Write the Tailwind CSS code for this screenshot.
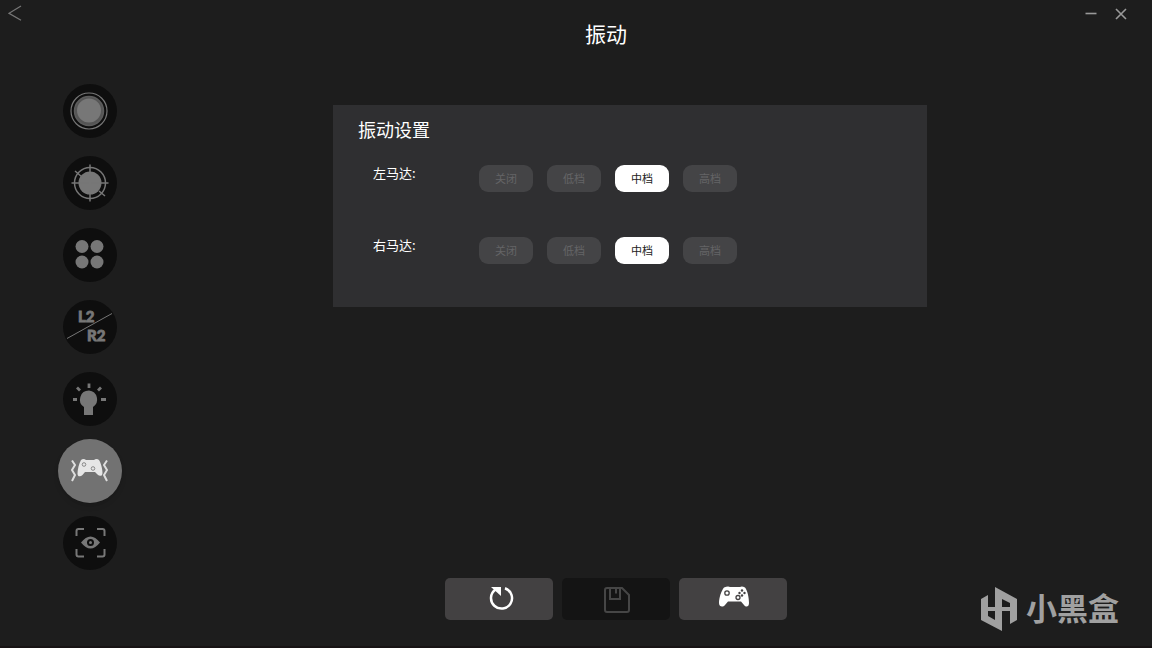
<!DOCTYPE html>
<html lang="zh-CN">
<head>
  <meta charset="UTF-8">
  <meta name="viewport" content="width=device-width, initial-scale=1">
  <title>振动</title>
  <script src="https://cdn.jsdelivr.net/npm/@tailwindcss/browser@4"></script>
</head>
<body class="bg-[#1d1d1d] min-h-screen flex flex-col text-white border-b-2 border-[#171314] font-['Noto_Sans_CJK_SC',sans-serif]">

  <header class="flex items-start justify-between h-[75px]">
    <button type="button" aria-label="返回" class="w-20 p-2 pt-[5px] text-[#777]">
      <svg class="w-[14px] h-4" viewBox="0 0 14 16" fill="none" stroke="currentColor" stroke-width="1.3"><path d="M13 1 1 8.3l12 7"/></svg>
    </button>
    <h1 class="text-[21px] leading-[30px] pt-[18px] pl-[60px]">振动</h1>
    <div class="w-20 flex justify-end gap-[18px] pt-2 pr-[25px] text-[#999]">
      <button type="button" aria-label="最小化">
        <svg class="w-3 h-3" viewBox="0 0 12 12" stroke="currentColor" stroke-width="1.6"><path d="M0.500 5.500h11"/></svg>
      </button>
      <button type="button" aria-label="关闭窗口">
        <svg class="w-3 h-3" viewBox="0 0 12 12" stroke="currentColor" stroke-width="1.6"><path d="m1 1 10 10M11 1 1 11"/></svg>
      </button>
    </div>
  </header>

  <div class="flex items-start">
    <nav class="flex flex-col w-[122px] pl-[58px] text-[#777]">
      <a href="#stick" aria-label="摇杆" class="h-[72px] flex items-center justify-center">
        <svg class="w-[54px] h-[54px] rounded-full bg-[#0e0e0e]" viewBox="0 0 54 54" fill="none" stroke="currentColor">
          <circle cx="26" cy="27" r="18" stroke-width="1.2"/>
          <circle cx="26" cy="27" r="14.500" fill="#555" stroke="#5c5c5c" stroke-width="1.500"/>
          <circle cx="26" cy="26.500" r="12" fill="currentColor" stroke="none"/>
        </svg>
      </a>
      <a href="#deadzone" aria-label="死区" class="h-[72px] flex items-center justify-center">
        <svg class="w-[54px] h-[54px] rounded-full bg-[#0e0e0e]" viewBox="0 0 54 54" fill="none" stroke="currentColor" stroke-width="1.500">
          <circle cx="27" cy="27" r="15.500"/>
          <circle cx="27" cy="27" r="11.500" fill="currentColor" stroke="none"/>
          <path d="M27 8.500v37M8.500 27h37M12 15l7 6M36 35l6 5"/>
        </svg>
      </a>
      <a href="#buttons" aria-label="按键" class="h-[72px] flex items-center justify-center">
        <svg class="w-[54px] h-[54px] rounded-full bg-[#0e0e0e]" viewBox="0 0 54 54" fill="currentColor">
          <circle cx="19" cy="18.500" r="6.500"/><circle cx="34" cy="18.500" r="6.500"/>
          <circle cx="19" cy="34" r="6.500"/><circle cx="34" cy="34" r="6.500"/>
        </svg>
      </a>
      <a href="#triggers" class="h-[72px] flex items-center justify-center">
        <svg class="w-[54px] h-[54px] rounded-full bg-[#0e0e0e] font-['Lato','Open_Sans',sans-serif] font-black text-[15px]" viewBox="0 0 54 54" fill="currentColor" stroke="currentColor">
          <path d="M4 38.500 49 13.500"/>
          <g stroke-width="0.800">
            <text x="15" y="22">L2</text>
            <text x="24" y="41">R2</text>
          </g>
        </svg>
      </a>
      <a href="#light" aria-label="灯光" class="h-[72px] flex items-center justify-center">
        <svg class="w-[54px] h-[54px] rounded-full bg-[#0e0e0e]" viewBox="0 0 54 54" fill="currentColor">
          <path d="M26 18.500a9 9 0 0 0-5 16.500v8h9v-8a9 9 0 0 0-4-16.500Z"/>
          <path d="M26 11.500v4.500M14 15.500l3 3M38 15.500l-3 3M10 27.500h4M38 27.500h5" stroke="currentColor" stroke-width="2.800"/>
        </svg>
      </a>
      <a href="#vibration" aria-label="振动" aria-current="page" class="h-[72px] flex items-center justify-center">
        <svg class="w-16 h-16 rounded-full bg-[#727272] shadow-md" viewBox="0 0 64 64" fill="#e6e6e6">
          <path d="M23 21c1.500-1.500 3.500-1.500 5 0h8c1.500-1.500 3.500-1.500 5 0 2 3 3.500 9 3.500 13 0 3.500-3 3.500-5 1.500l-2.500-2.500h-10L24.500 36c-2 2-5 2-5-1.500 0-4 1.500-10 3.500-13.500Z"/>
          <circle cx="26" cy="25.500" r="1.800" fill="none" stroke="#888"/>
          <circle cx="35" cy="29.500" r="1.800" fill="none" stroke="#888"/>
          <path d="m14 21.500 3 4.500-3 5 3 5-3 6M49 21.500 46 26l3 5-3 5 3 6" fill="none" stroke="#ddd" stroke-width="2"/>
        </svg>
      </a>
      <a href="#preview" aria-label="预览" class="h-[72px] flex items-center justify-center">
        <svg class="w-[54px] h-[54px] rounded-full bg-[#0e0e0e]" viewBox="0 0 54 54" fill="none" stroke="currentColor" stroke-width="2">
          <path d="M13.500 20v-5q0-2 2-2h5.500M34 13h5.500q2 0 2 2v5M41.500 33v5.500q0 2-2 2H34M21 40.500h-5.500q-2 0-2-2V33"/>
          <path d="M18 26.500q9.500-12 19 0-9.500 12-19 0Z" fill="currentColor" stroke="none"/>
          <circle cx="27.500" cy="26.500" r="2.500" stroke="#0e0e0e" fill="currentColor"/>
        </svg>
      </a>
    </nav>

    <main class="flex-1 pt-[30px] pl-[211px] pr-[225px]">
      <section class="bg-[#2f2f31] pt-3 pb-[43px] px-[25px]">
        <h2 class="text-[18px] leading-6">振动设置</h2>
        <form class="flex flex-col gap-[45px] pt-6 pl-[15px]">
          <fieldset class="flex">
            <legend class="float-left w-[106px] text-[13px] leading-4">左马达:</legend>
            <div class="flex gap-[14px] text-[11px] leading-[27px] text-center">
              <label class="relative"><input type="radio" name="left" class="peer sr-only"><span class="block w-[54px] rounded-[9px] bg-[#444446] text-[#646466] peer-checked:bg-white peer-checked:text-[#222]">关闭</span></label>
              <label class="relative"><input type="radio" name="left" class="peer sr-only"><span class="block w-[54px] rounded-[9px] bg-[#444446] text-[#646466] peer-checked:bg-white peer-checked:text-[#222]">低档</span></label>
              <label class="relative"><input type="radio" name="left" class="peer sr-only" checked><span class="block w-[54px] rounded-[9px] bg-[#444446] text-[#646466] peer-checked:bg-white peer-checked:text-[#222]">中档</span></label>
              <label class="relative"><input type="radio" name="left" class="peer sr-only"><span class="block w-[54px] rounded-[9px] bg-[#444446] text-[#646466] peer-checked:bg-white peer-checked:text-[#222]">高档</span></label>
            </div>
          </fieldset>
          <fieldset class="flex">
            <legend class="float-left w-[106px] text-[13px] leading-4">右马达:</legend>
            <div class="flex gap-[14px] text-[11px] leading-[27px] text-center">
              <label class="relative"><input type="radio" name="right" class="peer sr-only"><span class="block w-[54px] rounded-[9px] bg-[#444446] text-[#646466] peer-checked:bg-white peer-checked:text-[#222]">关闭</span></label>
              <label class="relative"><input type="radio" name="right" class="peer sr-only"><span class="block w-[54px] rounded-[9px] bg-[#444446] text-[#646466] peer-checked:bg-white peer-checked:text-[#222]">低档</span></label>
              <label class="relative"><input type="radio" name="right" class="peer sr-only" checked><span class="block w-[54px] rounded-[9px] bg-[#444446] text-[#646466] peer-checked:bg-white peer-checked:text-[#222]">中档</span></label>
              <label class="relative"><input type="radio" name="right" class="peer sr-only"><span class="block w-[54px] rounded-[9px] bg-[#444446] text-[#646466] peer-checked:bg-white peer-checked:text-[#222]">高档</span></label>
            </div>
          </fieldset>
        </form>
      </section>
    </main>
  </div>

  <footer class="-mt-px flex justify-center gap-[9px] pl-20 pb-[26px]">
    <button type="button" aria-label="重置" class="w-[108px] h-[42px] rounded-[5px] bg-[#434142] flex items-center justify-center">
      <svg class="w-[30px] h-[30px]" viewBox="0 0 30 30" fill="none" stroke="#fff" stroke-width="2.500">
        <path d="M21 4.200A10.500 10.500 0 1 1 11.500 5.500"/>
        <path d="M7 3h10v9Z" fill="#fff" stroke="none"/>
      </svg>
    </button>
    <button type="button" aria-label="保存" disabled class="w-[108px] h-[42px] rounded-[5px] bg-[#141414] flex items-center justify-center">
      <svg class="w-[30px] h-[30px]" viewBox="0 0 30 30" fill="none" stroke="#464646" stroke-width="2">
        <path d="M6 4h15l7 7v15q0 2-2 2H6q-2 0-2-2V6q0-2 2-2Z"/>
        <path d="M9 4v11h10V4M15 4.500v5"/>
      </svg>
    </button>
    <button type="button" aria-label="手柄" class="w-[108px] h-[42px] rounded-[5px] bg-[#434142] flex items-center justify-center">
      <svg class="w-[34px] h-[30px]" viewBox="0 0 34 30" fill="#fff">
        <path d="M8 3.500q4-1.500 6-.500h10q2-1 5 .500c2.500 3 4 10 4 15.500 0 4-3 4.500-5 2l-3-3.500H12L9 21c-2 2.500-6 2-6-2 0-5.500 2.500-12.500 5-15.500Z"/>
        <g fill="none" stroke="#434142" stroke-width="1.300"><circle cx="11" cy="9" r="2.200"/><circle cx="22" cy="13.500" r="2"/></g>
        <g fill="#434142"><circle cx="26" cy="6.500" r="1.200"/><circle cx="26" cy="11.500" r="1.200"/><circle cx="23.500" cy="9" r="1.200"/><circle cx="28.500" cy="9" r="1.200"/></g>
      </svg>
    </button>
  </footer>

  <!-- community badge -->
  <div class="absolute right-[33px] bottom-4 flex items-center gap-2 text-[#a0a0a0]">
    <svg class="w-[38px] h-11" viewBox="0 0 38 44" fill="currentColor">
      <path d="M1 12 8 8v21l7 4V24h7v20L1 33Z"/>
      <path d="M15 0 37 12v21l-7 4V16l-8-4v12h-7Z"/>
      <path d="M8 20h22v4H8Z"/>
    </svg>
    <span class="text-[31px] leading-[42px] pb-1 font-bold">小黑盒</span>
  </div>

</body>
</html>
